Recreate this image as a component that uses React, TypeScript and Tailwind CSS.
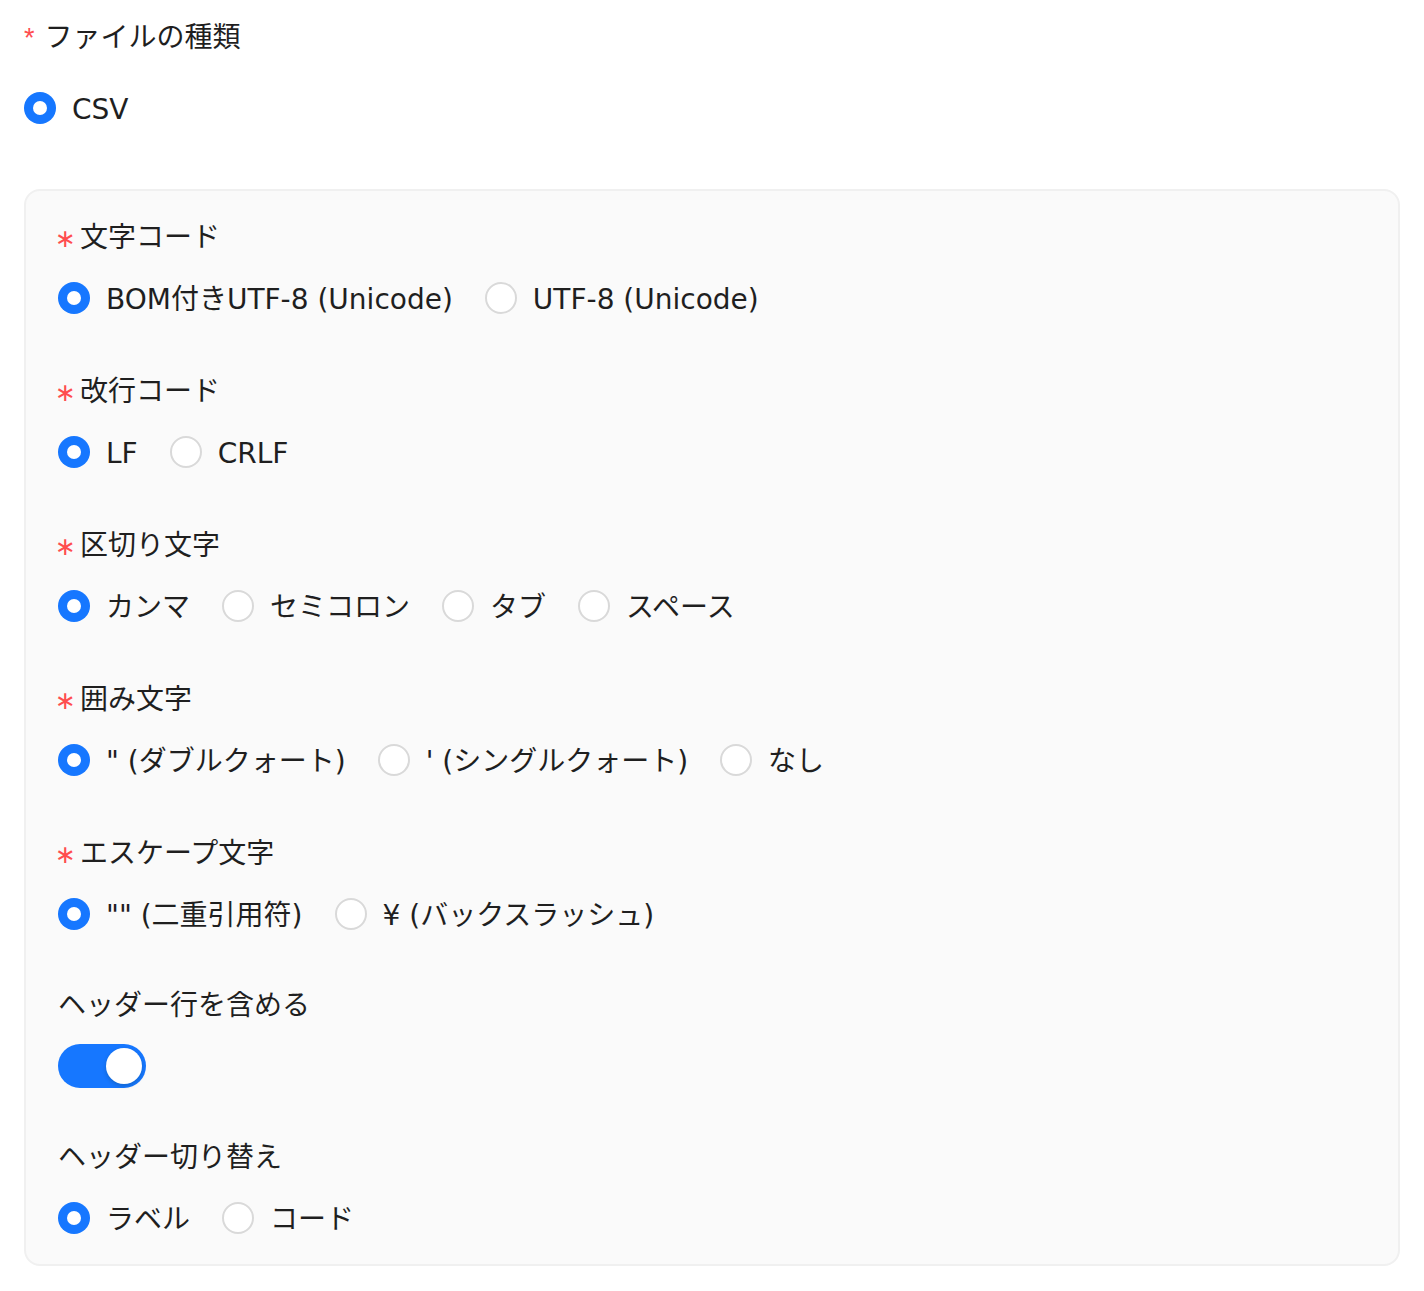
import React, { useState } from 'react';

type Option = { value: string; label: string };

type Field = {
  name: string;
  label: string;
  required?: boolean;
  options: Option[];
  spacing: string;
};

const fields: Field[] = [
  {
    name: 'encoding',
    label: '文字コード',
    required: true,
    spacing: 'mb-[46px]',
    options: [
      { value: 'utf8bom', label: 'BOM付きUTF-8 (Unicode)' },
      { value: 'utf8', label: 'UTF-8 (Unicode)' },
    ],
  },
  {
    name: 'newline',
    label: '改行コード',
    required: true,
    spacing: 'mb-[46px]',
    options: [
      { value: 'lf', label: 'LF' },
      { value: 'crlf', label: 'CRLF' },
    ],
  },
  {
    name: 'delimiter',
    label: '区切り文字',
    required: true,
    spacing: 'mb-[46px]',
    options: [
      { value: 'comma', label: 'カンマ' },
      { value: 'semicolon', label: 'セミコロン' },
      { value: 'tab', label: 'タブ' },
      { value: 'space', label: 'スペース' },
    ],
  },
  {
    name: 'quote',
    label: '囲み文字',
    required: true,
    spacing: 'mb-[46px]',
    options: [
      { value: 'double', label: '" (ダブルクォート)' },
      { value: 'single', label: "' (シングルクォート)" },
      { value: 'none', label: 'なし' },
    ],
  },
  {
    name: 'escape',
    label: 'エスケープ文字',
    required: true,
    spacing: 'mb-11',
    options: [
      { value: 'doubleQuote', label: '"" (二重引用符)' },
      { value: 'backslash', label: '¥ (バックスラッシュ)' },
    ],
  },
];

const RadioDot: React.FC<{ checked: boolean }> = ({ checked }) =>
  checked ? (
    <span className="flex h-8 w-8 shrink-0 items-center justify-center rounded-full bg-[#1677ff]">
      <span className="h-[14px] w-[14px] rounded-full bg-white" />
    </span>
  ) : (
    <span className="h-8 w-8 shrink-0 rounded-full border-2 border-[#d9d9d9] bg-white" />
  );

const RadioGroup: React.FC<{
  options: Option[];
  value: string;
  onChange: (v: string) => void;
}> = ({ options, value, onChange }) => (
  <div className="flex h-12 items-center">
    {options.map((o) => (
      <label
        key={o.value}
        className="mr-4 flex cursor-pointer items-center"
        onClick={() => onChange(o.value)}
      >
        <RadioDot checked={value === o.value} />
        <span className="whitespace-pre px-4 pt-1 leading-[44px]">{o.label}</span>
      </label>
    ))}
  </div>
);

const FieldLabel: React.FC<{ text: string; required?: boolean }> = ({ text, required }) => (
  <div className="flex h-11 items-center leading-[44px]">
    {required && (
      <span className="w-[22px] shrink-0 -translate-x-[3px] translate-y-[3px] font-['DejaVu_Sans',sans-serif] text-[25px] text-[#ff4d4f]">
        ∗
      </span>
    )}
    <span className="pt-1">{text}</span>
  </div>
);

const App: React.FC = () => {
  const [values, setValues] = useState<Record<string, string>>({
    encoding: 'utf8bom',
    newline: 'lf',
    delimiter: 'comma',
    quote: 'double',
    escape: 'doubleQuote',
  });
  const [fileType, setFileType] = useState('csv');
  const [withHeader, setWithHeader] = useState(true);
  const [headerMode, setHeaderMode] = useState('label');

  const set = (name: string) => (v: string) => setValues((s) => ({ ...s, [name]: v }));

  return (
    <div className="min-h-screen bg-white px-6 pt-[14px] font-['DejaVu_Sans','Noto_Sans_CJK_JP',sans-serif] text-[28px] text-[#1f1f1f]">
      <div className="flex h-11 items-center">
        <span className="mr-[10px] translate-y-[2px] font-['Liberation_Sans',sans-serif] text-[27px] text-[#ff4d4f]">*</span>
        <span className="pt-1">ファイルの種類</span>
      </div>
      <div className="mt-[26px]">
        <RadioGroup
          options={[{ value: 'csv', label: 'CSV' }]}
          value={fileType}
          onChange={setFileType}
        />
      </div>

      <div className="mt-[57px] rounded-2xl border-2 border-[#f0f0f0] bg-[#fafafa] px-8 pt-[23px] pb-[22px]">
        {fields.map((f) => (
          <div key={f.name} className={f.spacing}>
            <FieldLabel text={f.label} required={f.required} />
            <div className="mt-4">
              <RadioGroup options={f.options} value={values[f.name]} onChange={set(f.name)} />
            </div>
          </div>
        ))}

        <div className="mb-11">
          <FieldLabel text="ヘッダー行を含める" />
          <div className="mt-4 flex h-12 items-center">
            <button
              type="button"
              onClick={() => setWithHeader((v) => !v)}
              className={`flex h-11 w-[88px] items-center rounded-full p-1 ${
                withHeader ? 'justify-end bg-[#1677ff]' : 'justify-start bg-[#bfbfbf]'
              }`}
            >
              <span className="h-9 w-9 rounded-full bg-white shadow-[0_2px_4px_rgba(0,35,11,0.2)]" />
            </button>
          </div>
        </div>

        <div>
          <FieldLabel text="ヘッダー切り替え" />
          <div className="mt-4">
            <RadioGroup
              options={[
                { value: 'label', label: 'ラベル' },
                { value: 'code', label: 'コード' },
              ]}
              value={headerMode}
              onChange={setHeaderMode}
            />
          </div>
        </div>
      </div>
    </div>
  );
};

export default App;
